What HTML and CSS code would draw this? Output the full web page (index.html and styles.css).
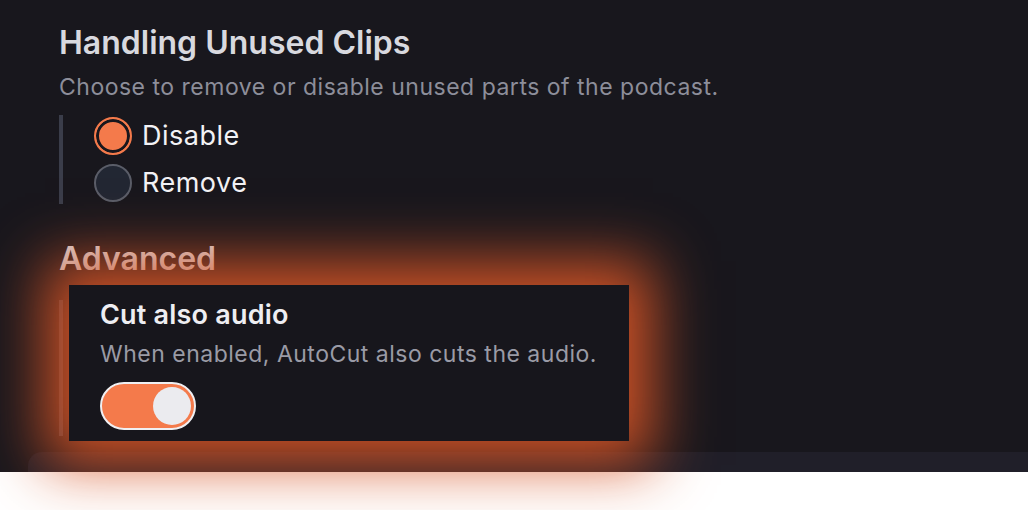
FILE: index.html
```html
<!DOCTYPE html>
<html lang="en">
<head>
  <meta charset="UTF-8" />
  <meta name="viewport" content="width=device-width, initial-scale=1.0"/>
  <title>AutoCut Settings</title>
  <link rel="stylesheet" href="styles.css">
</head>
<body>
  <div class="panel">
    <div class="content">
      <h2 class="section-title">Handling Unused Clips</h2>
      <p class="section-desc">Choose to remove or disable unused parts of the podcast.</p>

      <!-- Radio group -->
      <div class="options">
        <label class="option">
          <span class="radio checked"></span>
          Disable
        </label>
        <label class="option">
          <span class="radio"></span>
          Remove
        </label>
      </div>

      <h2 class="section-title advanced">Advanced</h2>

      <div class="adv-row">
        <div class="bar"></div>
        <div class="card">
          <h3 class="card-title">Cut also audio</h3>
          <p class="card-desc">When enabled, AutoCut also cuts the audio.</p>
          <div class="toggle on"><span class="knob"></span></div>
        </div>
      </div>
    </div>

    <div class="footer-strip"></div>
  </div>
  <div class="below"></div>
</body>
</html>
```

FILE: styles.css
```css
html, body {
  margin: 0;
  height: 100%;
  background-color: white;
}

body {
  font-family: Inter, "Noto Sans", sans-serif;
}

.panel {
  background-color: #18171d;
  height: 472px;
  display: flex;
  flex-direction: column;
}

.below {
  height: 38px;
  background-color: white;
}

.content {
  flex: 1;
  padding: 23px 0 0 59px;
}

.section-title {
  margin: 0;
  font-size: 32px;
  line-height: 40px;
  font-weight: 600;
  color: #d8d9df;
}

.section-desc {
  margin: 9px 0 0;
  font-size: 23px;
  line-height: 30px;
  letter-spacing: 0.5px;
  color: #8d8e9a;
}

.options {
  margin-top: 13px;
  border-left: 4px solid #3a3d4a;
  padding: 2px 0 2px 31px;
  display: flex;
  flex-direction: column;
  gap: 9px;
}

.option {
  display: flex;
  align-items: center;
  gap: 10px;
  font-size: 27px;
  line-height: 38px;
  letter-spacing: 0.5px;
  color: #f2f2f5;
}

.radio {
  width: 38px;
  height: 38px;
  box-sizing: border-box;
  border-radius: 50%;
  border: 2px solid #5a5d68;
  background-color: #222733;
}

.radio.checked {
  border-color: #f47a4b;
  background-color: #f47a4b;
  box-shadow: inset 0 0 0 3px #18171d;
}

.advanced {
  margin-top: 35px;
}

.adv-row {
  display: flex;
  margin-top: 6px;
}

.bar {
  width: 4px;
  margin: 15px 6px 5px 0;
  background-color: #3a3d4a;
}

/* highlighted setting */
.card {
  position: relative;
  z-index: 1;
  width: 560px;
  height: 156px;
  box-sizing: border-box;
  padding: 14px 31px 0;
  background-color: #17161c;
  box-shadow: 0 0 56px 24px rgba(214, 84, 38, 0.95);
}

.card-title {
  margin: 0;
  font-size: 27px;
  line-height: 32px;
  font-weight: 600;
  letter-spacing: 0.2px;
  color: #eeeef2;
}

.card-desc {
  margin: 8px 0 0;
  font-size: 23px;
  line-height: 30px;
  letter-spacing: 0.5px;
  color: #9a9ba6;
}

.toggle {
  margin-top: 13px;
  width: 96px;
  height: 48px;
  box-sizing: border-box;
  border: 2px solid #efeff2;
  border-radius: 24px;
  background-color: #f47a4b;
  padding: 3px;
  display: flex;
  justify-content: flex-end;
}

.knob {
  width: 38px;
  height: 38px;
  border-radius: 50%;
  background-color: #ebebef;
}

.footer-strip {
  margin-left: 28px;
  height: 20px;
  background-color: #201f29;
  border-top-left-radius: 14px;
}
```
